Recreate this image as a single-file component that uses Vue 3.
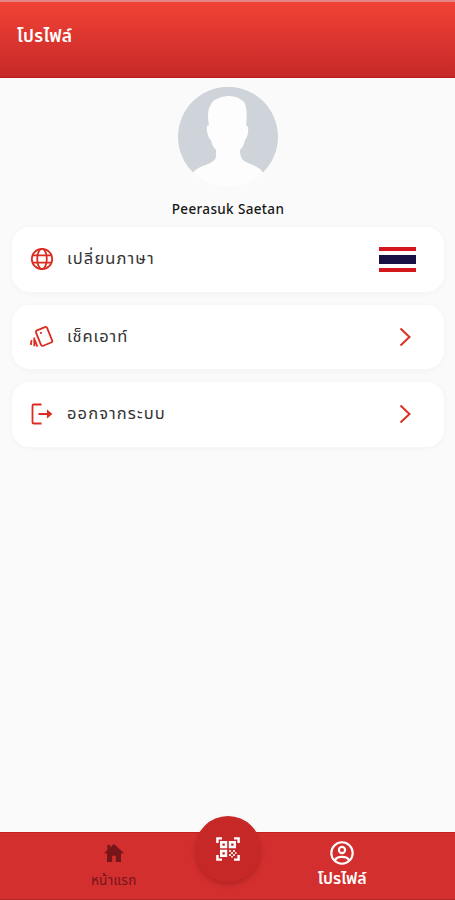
<script setup>
import { ref } from 'vue';

const activeTab = ref('profile');

const menus = [
    { id: 'language', label: 'เปลี่ยนภาษา' },
    { id: 'checkout', label: 'เช็คเอาท์' },
    { id: 'logout', label: 'ออกจากระบบ' },
];
</script>

<template>
    <div class="screen">
        <header class="header">
            <h1 class="header-ttl">โปรไฟล์</h1>
        </header>

        <main class="content">
            <svg class="avatar" viewBox="0 0 100 100">
                <circle cx="50" cy="50" r="50" fill="#fdfdfd" />
                <path d="M15 85.5A50 50 0 1 1 85 85.5Q82 81 77 79L66 74Q62 71 62 63Q66 59 67 53Q71 48 70 40L68 38Q70 21 66 15Q59 8 49 9Q35 10 31 21Q29 29 31 38Q28 38 29 44Q30 51 33 53Q34 59 38 63V70Q37 74 30 77Q18 81 15 85.5Z" fill="#ced4d9" />
            </svg>
            <p class="name">Peerasuk Saetan</p>

            <ul class="menu">
                <li v-for="menu in menus" :key="menu.id" class="menu-item">
                    <svg v-if="menu.id === 'language'" class="menu-icon" viewBox="0 0 24 24">
                        <circle cx="12" cy="12" r="10.2" />
                        <ellipse cx="12" cy="12" rx="4.8" ry="10.2" />
                        <path d="M2.8 8.3H21.2M2.8 15.7H21.2" />
                    </svg>
                    <svg v-else-if="menu.id === 'checkout'" class="menu-icon" viewBox="0 0 24 24">
                        <rect x="8.3" y="3.2" width="12" height="16.6" rx="1.7" transform="rotate(-22 14 12)" />
                        <path d="M4.3 12.5V21.3M4.8 15L7.3 21.6M1.6 15.2L.8 20" />
                        <circle class="dot" cx="11" cy="8" r="1.1" />
                    </svg>
                    <svg v-else class="menu-icon" viewBox="0 0 24 24">
                        <path d="M11.5 2.5H3.8Q2.5 2.5 2.5 3.8V20.2Q2.5 21.5 3.8 21.5H11.5M8.5 12H20" />
                        <path class="dot" d="M17 7.5L22.4 12L17 16.5Z" />
                    </svg>
                    <span class="menu-label" :class="menu.id">{{ menu.label }}</span>
                    <span v-if="menu.id === 'language'" class="flag"></span>
                    <svg v-else class="arrow" viewBox="0 0 12 20">
                        <path d="M1.5 1.5L10.5 10L1.5 18.5" />
                    </svg>
                </li>
            </ul>
        </main>

        <nav class="nav">
            <button class="nav-btn home" :class="{ active: activeTab === 'home' }" @click="activeTab = 'home'">
                <svg class="home-icon" viewBox="0 0 20 18">
                    <path d="M10 0L20 9.3H17V18H11.8V11.7H8.2V18H3V9.3H0L3.4 6V1H6.2V3.5Z" fill="currentColor" />
                </svg>
                <span>หน้าแรก</span>
            </button>
            <button class="scan">
                <svg class="scan-icon" viewBox="0 0 24 24">
                    <path d="M1.4 6V1.4H6M18 1.4H22.6V6M22.6 18V22.6H18M6 22.6H1.4V18" />
                    <path d="M5.2 5.2H10V10H5.2ZM14 5.2H18.8V10H14ZM5.2 14H10V18.8H5.2Z" />
                    <path class="bits" d="M13 13h2v2h-2zM17 13h2v2h-2zM15 15h2v2h-2zM19 15h1.5v2H19zM13 17h2v2h-2zM17 17h2v2h-2zM15 19h2v1.5h-2z" />
                </svg>
            </button>
            <button class="nav-btn profile" :class="{ active: activeTab === 'profile' }" @click="activeTab = 'profile'">
                <svg class="profile-icon" viewBox="0 0 24 24">
                    <circle cx="12" cy="12" r="10.7" />
                    <circle cx="12" cy="9" r="3.1" />
                    <path d="M5.2 19Q6.5 15.9 12 15.9Q17.5 15.9 18.8 19" />
                </svg>
                <span>โปรไฟล์</span>
            </button>
        </nav>
    </div>
</template>

<style>
body {
    margin: 0;
}
</style>

<style scoped>
.screen {
    display: flex;
    flex-direction: column;
    height: 900px;
    overflow: hidden;
    background: #fafafa;
    font-family: "Noto Sans Thai", "Noto Sans", "Liberation Sans", sans-serif;
}
.header {
    box-sizing: border-box;
    height: 78px;
    padding: 23px 17px 0;
    border-top: 2px solid #e28583;
    border-bottom: 1px solid #b91c18;
    background: linear-gradient(#f14336, #c62828);
}
.header-ttl {
    margin: 0;
    color: #fff;
    font-size: 17.5px;
    font-weight: 600;
    line-height: 24px;
    letter-spacing: .3px;
}
.content {
    flex: 1;
    display: flex;
    flex-direction: column;
    align-items: center;
    padding: 9px 11px 0 12px;
}
.avatar {
    width: 100px;
    height: 100px;
}
.name {
    margin: 12px 0 8px;
    color: #171717;
    font-family: "Noto Sans", sans-serif;
    font-size: 13.5px;
    font-weight: 500;
    line-height: 20px;
    letter-spacing: .35px;
    white-space: nowrap;
}
.menu {
    display: flex;
    flex-direction: column;
    gap: 13px;
    width: 100%;
    margin: 0;
    padding: 0;
    list-style: none;
}
.menu-item {
    display: flex;
    align-items: center;
    box-sizing: border-box;
    height: 64.5px;
    padding: 0 28px 0 18px;
    border-radius: 18px;
    background: #fff;
    box-shadow: 0 1px 7px rgba(0, 0, 0, .035);
}
.menu-icon {
    width: 24px;
    height: 24px;
    margin-right: 13px;
    fill: none;
    stroke: #dc2b20;
    stroke-width: 1.8;
}
.menu-icon .dot {
    fill: #dc2b20;
    stroke: none;
}
.menu-label {
    flex: 1;
    color: #333;
    font-size: 16.5px;
    line-height: 24px;
    letter-spacing: 1.1px;
}
.menu-label.checkout {
    letter-spacing: .9px;
}
.flag {
    width: 37px;
    height: 25px;
    background: linear-gradient(#d5161c 4px, #fff 4px 8px, #171044 8px 17px, #fff 17px 21px, #d5161c 21px);
}
.arrow {
    width: 12px;
    height: 20px;
    margin-right: 5px;
    fill: none;
    stroke: #d93025;
    stroke-width: 2;
}
.nav {
    display: grid;
    grid-template-columns: 1fr 1fr;
    position: relative;
    height: 68px;
    background: #d32f2f;
    box-shadow: inset 0 1px #c52020, inset 0 -1px #b52525;
}
button {
    padding: 0;
    border: 0;
    background: none;
    font-family: inherit;
}
.nav-btn {
    display: flex;
    flex-direction: column;
    align-items: center;
    color: #76151a;
    font-size: 13.5px;
    line-height: 20px;
    letter-spacing: .3px;
    white-space: nowrap;
}
.nav-btn.active {
    padding-left: 2px;
    color: #fff;
    font-size: 16px;
    font-weight: 600;
    letter-spacing: 0;
}
.home-icon {
    width: 20px;
    height: 18px;
    margin: 12px 0 9px;
}
.profile-icon {
    width: 24px;
    height: 24px;
    margin: 9px 0 4px;
    fill: none;
    stroke: currentColor;
    stroke-width: 2.1;
}
.scan {
    display: flex;
    align-items: center;
    justify-content: center;
    position: absolute;
    top: -16px;
    left: 195px;
    width: 66px;
    height: 66px;
    border-radius: 50%;
    background: #c62828;
    box-shadow: 0 3px 5px rgba(100, 0, 0, .25);
}
.scan-icon {
    width: 24px;
    height: 24px;
    fill: none;
    stroke: #fff;
    stroke-width: 2.4;
}
.scan-icon .bits {
    fill: #f7d6d6;
    stroke: none;
}
</style>
